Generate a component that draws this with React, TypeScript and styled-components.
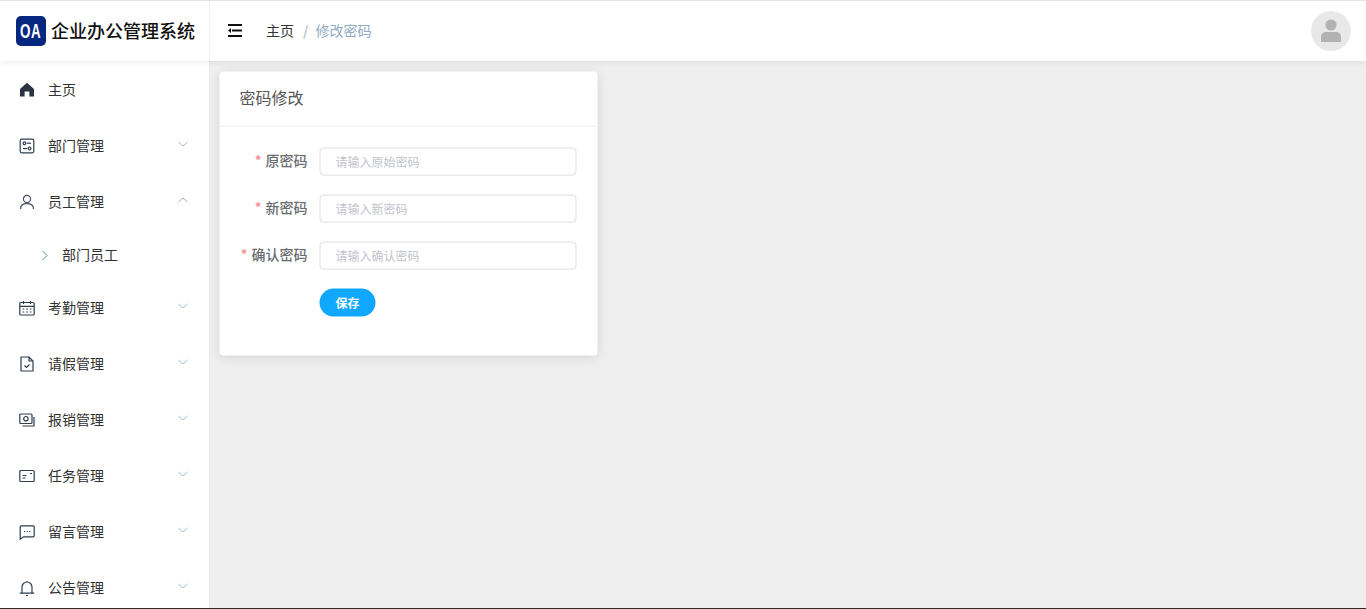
import React from 'react';
import styled, { createGlobalStyle } from 'styled-components';

const Global = createGlobalStyle`
  html, body { margin: 0; padding: 0; height: 100%; overflow: hidden; background: #eeeeee; }
  * { box-sizing: border-box; }
  body { font-family: "Noto Sans CJK SC", "Liberation Sans", sans-serif; }
`;

const Shell = styled.div`
  width: 1366px; height: 609px; display: flex; flex-direction: column;
  border-top: 1px solid #e4e4e4; border-bottom: 1px solid #2b2b2b; overflow: hidden; background: #efefef;
`;
const Top = styled.header`
  height: 60px; flex: none; display: flex; background: #fff; position: relative; z-index: 2;
  box-shadow: 0 2px 6px rgba(0,0,0,.07);
`;
const Brand = styled.div`
  width: 210px; flex: none; display: flex; align-items: center; gap: 5px; padding-left: 16px; border-right: 1px solid #f0f0f0;
`;
const LogoMark = styled.div`
  width: 30px; height: 30px; border-radius: 5px; background: #05277f; color: #fff;
  display: flex; align-items: center; justify-content: center;
  font: 700 21px "Liberation Sans", sans-serif;
`;
const LogoLetters = styled.span` display: inline-block; transform: scaleX(.64); letter-spacing: 1px; `;
const BrandName = styled.div` font-size: 18px; font-weight: 500; color: #111; white-space: nowrap; margin-top: -2px; `;
const Bar = styled.div` flex: 1; display: flex; align-items: center; padding: 0 15px 0 17px; `;
const Toggle = styled.svg` width: 15px; height: 13px; flex: none; margin-right: 24px; margin-top: -2px; `;
const Crumb = styled.span<{ $muted?: boolean }>` font-size: 14px; margin-top: -2px; color: ${p => p.$muted ? '#8faac4' : '#333'}; `;
const Slash = styled.span` font-size: 14px; font-weight: 700; color: #c0c4cc; margin: -2px 7px 0 9px; `;
const Avatar = styled.div`
  margin-left: auto; width: 40px; height: 40px; border-radius: 50%; background: #e8e8e8;
  display: flex; align-items: center; justify-content: center;
`;
const Body = styled.div` flex: 1; min-height: 0; display: flex; `;
const Side = styled.nav` width: 210px; flex: none; background: #fff; border-right: 1px solid #ebebeb; overflow: hidden; padding-top: 1px; `;
const Row = styled.div`
  height: 56px; display: flex; align-items: center; padding: 0 20px 0 19px; font-size: 14px; color: #303133;
`;
const SubRow = styled.div`
  height: 50px; display: flex; align-items: center; padding-left: 41px; font-size: 14px; color: #303133;
`;
const RowText = styled.span` margin-top: -2px; `;
const IconSlot = styled.span` width: 16px; height: 16px; flex: none; display: flex; margin-right: 13px; color: #2c3e50; `;
const Chevron = styled.svg` width: 12px; height: 12px; margin-left: auto; margin-top: -4px; flex: none; `;
const SubChevron = styled.svg` width: 8px; height: 11px; margin-right: 13px; flex: none; `;
const Main = styled.main` flex: 1; padding: 10px; `;
const Card = styled.section`
  width: 378px; height: 284px; background: #fff; border-radius: 4px; box-shadow: 0 2px 12px rgba(0,0,0,.1);
  transform: translate(-0.5px, 0.6px);
`;
const CardHead = styled.div`
  height: 55px; padding: 0 20px; display: flex; align-items: center; border-bottom: 1px solid #ebeef5; font-size: 16px; color: #555;
`;
const CardTitle = styled.span` margin-top: -4px; `;
const Form = styled.div` padding: 21px 20px 0; display: flex; flex-direction: column; gap: 19px; `;
const Field = styled.div` display: flex; align-items: center; height: 28px; `;
const Label = styled.label` width: 68px; margin-right: 12px; text-align: right; font-size: 14px; font-weight: 500; color: #6a6c70; white-space: nowrap; margin-top: -4px; `;
const Star = styled.span` color: #f78989; margin-right: 4px; `;
const Input = styled.input`
  width: 257px; height: 28px; border: 1px solid #dcdfe6; border-radius: 4px; padding: 0 15px 2px; font: 12px "Noto Sans CJK SC", sans-serif; outline: none;
  &::placeholder { color: #c0c4cc; opacity: 1; }
`;
const Save = styled.button`
  margin-left: 80px; width: 56px; height: 28px; border: 0; border-radius: 14px; background: #10a7ff; color: #fff;
  font: 700 12px "Noto Sans CJK SC", sans-serif; padding: 0 0 2px;
`;

const s = { fill: 'none', stroke: 'currentColor', strokeWidth: 1.2 } as const;
const icons: Record<string, React.ReactNode> = {
  home: <svg width="16" height="16" viewBox="0 0 16 16"><path d="M8 .8 15 7v7.5h-4.6V9.5H5.6v5H1V7z" fill="#2c3340" /></svg>,
  dept: <svg width="16" height="16" viewBox="0 0 16 16" {...s}><rect x="1.2" y="1.2" width="13.6" height="13.6" rx="1.5" /><circle cx="5.5" cy="5.2" r="1.4" /><path d="M8 5.2h4" /><path d="M4 10.6h4" /><circle cx="10.5" cy="10.6" r="1.4" /></svg>,
  user: <svg width="16" height="16" viewBox="0 0 16 16" {...s} stroke="#4a5566"><circle cx="8" cy="5" r="3.6" /><path d="M1.5 15c0-3.6 2.6-5.3 6.5-5.3s6.5 1.7 6.5 5.3" /></svg>,
  cal: <svg width="16" height="16" viewBox="0 0 16 16" {...s}><rect x=".8" y="2.5" width="14.4" height="12.5" rx="1" /><path d="M.8 6.3h14.4M4.5 1v3M11.5 1v3" /><path d="M3.6 9h1.6M7.2 9h1.6M10.8 9h1.6M3.6 12h1.6M7.2 12h1.6M10.8 12h1.6" /></svg>,
  doc: <svg width="16" height="16" viewBox="0 0 16 16" {...s}><path d="M2 1h8l4 4v10H2zM10 1v4h4" /><path d="m5.5 9.5 2 2 3-3" /></svg>,
  money: <svg width="16" height="16" viewBox="0 0 16 16" {...s}><rect x=".8" y="2" width="12.2" height="9.5" rx="1" /><circle cx="6.9" cy="6.7" r="2.2" /><path d="M15 5v9H3.5" /></svg>,
  task: <svg width="16" height="16" viewBox="0 0 16 16" {...s}><rect x=".8" y="2.5" width="14.4" height="11" rx="1" /><path d="M3.5 7.5h4M3.5 10h3M11 5.5h2" /></svg>,
  msg: <svg width="16" height="16" viewBox="0 0 16 16" {...s}><path d="M2.2 1.8h12a1 1 0 0 1 1 1v9a1 1 0 0 1-1 1H4.5l-3.3 2.4V2.8a1 1 0 0 1 1-1z" /><path d="M5 7.5h1.2M7.6 7.5h1.2M10.2 7.5h1.2" /></svg>,
  bell: <svg width="16" height="16" viewBox="0 0 16 16" {...s}><path d="M3 13V7a5 5 0 0 1 10 0v6M.8 13.2h14.4M7 15.6h2M8 1v1" /></svg>,
};

const Down = () => <Chevron viewBox="0 0 12 12" fill="none" stroke="#a5bcd8" strokeWidth="1"><path d="m1.5 4 4.5 4 4.5-4" /></Chevron>;
const Up = () => <Chevron viewBox="0 0 12 12" fill="none" stroke="#c9a99b" strokeWidth="1"><path d="m1.5 8 4.5-4 4.5 4" /></Chevron>;

const Item = ({ icon, text, arrow }: { icon: string; text: string; arrow?: 'up' | 'down' }) => (
  <Row>
    <IconSlot>{icons[icon]}</IconSlot>
    <RowText>{text}</RowText>
    {arrow === 'down' && <Down />}
    {arrow === 'up' && <Up />}
  </Row>
);

const fields = [
  ['原密码', '请输入原始密码'],
  ['新密码', '请输入新密码'],
  ['确认密码', '请输入确认密码'],
];

export default function App() {
  return (
    <Shell>
      <Global />
      <Top>
        <Brand>
          <LogoMark><LogoLetters>OA</LogoLetters></LogoMark>
          <BrandName>企业办公管理系统</BrandName>
        </Brand>
        <Bar>
          <Toggle viewBox="0 0 15 13" fill="#111"><path d="M1 0h14v2H1zM5 5.5h10v2H5zM1 11h14v2H1zM4 4v5L1 6.5z" /></Toggle>
          <Crumb>主页</Crumb><Slash>/</Slash><Crumb $muted>修改密码</Crumb>
          <Avatar>
            <svg width="22" height="24" viewBox="0 0 22 24" fill="#b2b2b2"><circle cx="11" cy="6" r="5.6" /><path d="M1 23v-5c0-3 2-5 5-5h10c3 0 5 2 5 5v5z" /></svg>
          </Avatar>
        </Bar>
      </Top>
      <Body>
        <Side>
          <Item icon="home" text="主页" />
          <Item icon="dept" text="部门管理" arrow="down" />
          <Item icon="user" text="员工管理" arrow="up" />
          <SubRow>
            <SubChevron viewBox="0 0 8 11" fill="none" stroke="#5f86b8" strokeWidth="1"><path d="m1.5 1 4.5 4.5L1.5 10" /></SubChevron>
            <RowText>部门员工</RowText>
          </SubRow>
          <Item icon="cal" text="考勤管理" arrow="down" />
          <Item icon="doc" text="请假管理" arrow="down" />
          <Item icon="money" text="报销管理" arrow="down" />
          <Item icon="task" text="任务管理" arrow="down" />
          <Item icon="msg" text="留言管理" arrow="down" />
          <Item icon="bell" text="公告管理" arrow="down" />
        </Side>
        <Main>
          <Card>
            <CardHead><CardTitle>密码修改</CardTitle></CardHead>
            <Form>
              {fields.map(([l, p]) => (
                <Field key={l}>
                  <Label><Star>*</Star>{l}</Label>
                  <Input placeholder={p} />
                </Field>
              ))}
              <Save>保存</Save>
            </Form>
          </Card>
        </Main>
      </Body>
    </Shell>
  );
}
